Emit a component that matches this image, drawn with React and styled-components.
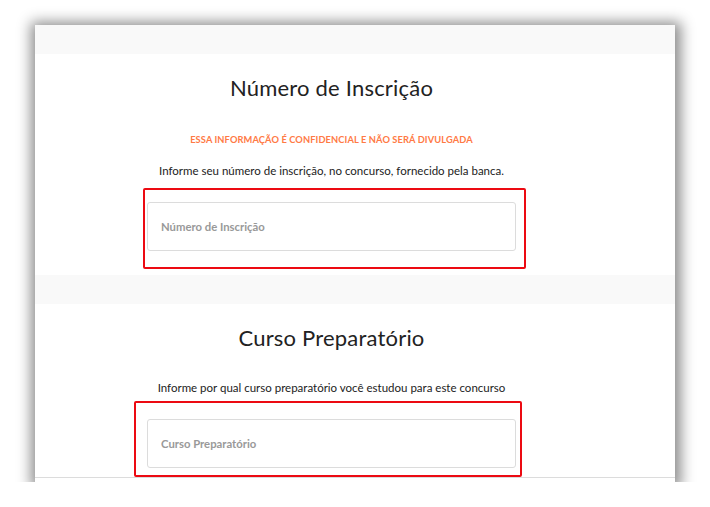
import styled, { createGlobalStyle } from "styled-components";

const GlobalStyle = createGlobalStyle`
  html, body {
    margin: 0;
    padding: 0;
    background: #fff;
  }
  body {
    font-family: Lato, "Noto Sans", sans-serif;
  }
`;

const Page = styled.div`
  padding: 25px 0 0 35px;
`;

const Frame = styled.div`
  width: 640px;
  height: 457px;
  overflow: hidden;
  background: #fff;
  box-shadow: 1px 2px 13px 5px rgba(0, 0, 0, 0.45);
  display: flex;
  flex-direction: column;
`;

const Band = styled.div`
  height: 29px;
  flex-shrink: 0;
  background: #f9f9f9;
`;

const Section = styled.section`
  background: #fff;
  height: ${(p) => p.$height}px;
  flex-shrink: 0;
  padding-left: 112px;
  border-bottom: ${(p) => (p.$line ? "1px solid #dcdcdc" : "none")};
  box-sizing: border-box;
`;

const Column = styled.div`
  width: 369px;
  display: flex;
  flex-direction: column;
  align-items: center;
`;

const Title = styled.h2`
  margin: 21px 0 0;
  font-size: 22px;
  line-height: 26px;
  font-weight: 400;
  color: #222;
  letter-spacing: 0.2px;
`;

const Notice = styled.p`
  margin: ${(p) => p.$top}px 0 0;
  font-size: 9.3px;
  line-height: 12px;
  font-weight: 700;
  color: #ff7a45;
  letter-spacing: 0.1px;
  white-space: nowrap;
`;

const Hint = styled.p`
  margin: ${(p) => p.$top}px 0 0;
  font-size: 11.5px;
  line-height: 14px;
  color: #222;
  white-space: nowrap;
`;

const Field = styled.div`
  position: relative;
  align-self: stretch;
  margin-top: ${(p) => p.$top}px;
`;

const Input = styled.input`
  display: block;
  width: 100%;
  height: 49px;
  box-sizing: border-box;
  border: 1px solid #dcdcdc;
  border-radius: 3px;
  padding: 0 13px;
  font-family: inherit;
  font-size: 11.3px;
  font-weight: 700;
  color: #333;
  background: #fff;
  outline: none;

  &::placeholder {
    color: #999;
  }
`;

const Highlight = styled.div`
  position: absolute;
  top: ${(p) => p.$t}px;
  left: ${(p) => p.$l}px;
  right: ${(p) => p.$r}px;
  bottom: ${(p) => p.$b}px;
  border: 2px solid #ec0a12;
  border-radius: 2px;
  pointer-events: none;
`;

export default function App() {
  return (
    <>
      <GlobalStyle />
      <Page>
        <Frame>
          <Band />
          <Section $height={221}>
            <Column>
              <Title>Número de Inscrição</Title>
              <Notice $top={33}>
                ESSA INFORMAÇÃO É CONFIDENCIAL E NÃO SERÁ DIVULGADA
              </Notice>
              <Hint $top={18}>
                Informe seu número de inscrição, no concurso, fornecido pela banca.
              </Hint>
              <Field $top={24}>
                <Input placeholder="Número de Inscrição" />
                <Highlight $t={-14} $l={-4} $r={-10} $b={-18} />
              </Field>
            </Column>
          </Section>
          <Band />
          <Section $height={174} $line>
            <Column>
              <Title>Curso Preparatório</Title>
              <Hint $top={30}>
                Informe por qual curso preparatório você estudou para este concurso
              </Hint>
              <Field $top={24}>
                <Input placeholder="Curso Preparatório" />
                <Highlight $t={-18} $l={-13} $r={-6} $b={-9} />
              </Field>
            </Column>
          </Section>
        </Frame>
      </Page>
    </>
  );
}
